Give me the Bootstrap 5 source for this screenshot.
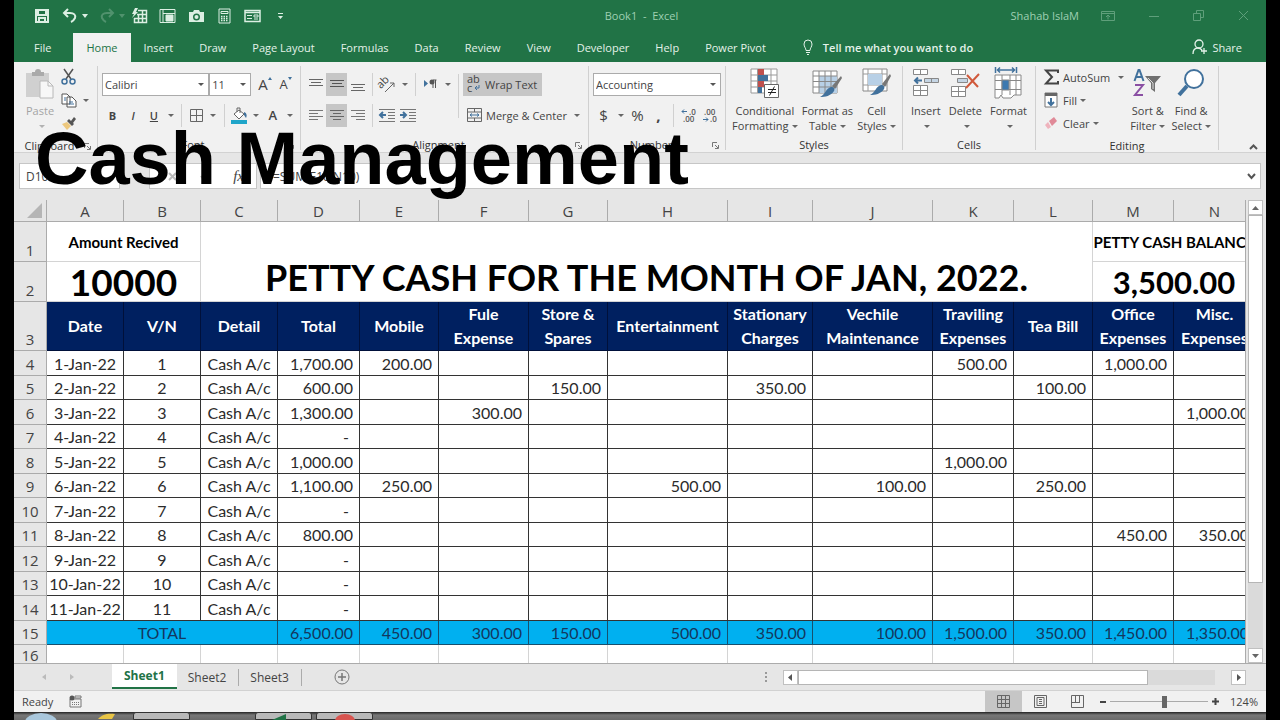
<!DOCTYPE html>
<html lang="en">
<head>
  <meta charset="UTF-8" />
  <title>Book1 - Excel</title>
  <meta name="viewport" content="width=device-width, initial-scale=1" />
  <link href="https://cdn.jsdelivr.net/npm/bootstrap@5.3.3/dist/css/bootstrap.min.css" rel="stylesheet" />
  <style>
    :root {
      --xl-green: #217346;
      --xl-ribbon: #f1f1f1;
      --xl-chrome: #e6e6e6;
      --xl-line: #ababab;
      --xl-text: #444;
    }
    body {
      background: #000;
      color: var(--xl-text);
      font-family: "Open Sans", "Noto Sans", sans-serif;
      font-size: 11px;
      line-height: 15px;
      padding: 0 14px;
    }
    svg { display: block; flex-shrink: 0; overflow: visible; }
    .btn {
      --bs-btn-padding-x: 0;
      --bs-btn-padding-y: 0;
      --bs-btn-font-size: 11px;
      --bs-btn-line-height: 15px;
      --bs-btn-color: #444;
      --bs-btn-border-width: 0;
      --bs-btn-border-radius: 0;
      white-space: nowrap;
    }

    /* title bar and ribbon tabs */
    .titlebar { background: var(--xl-green); height: 32px; color: #9fd0b2; }
    .titlebar .btn { --bs-btn-color: #dcefe3; }
    .titlebar .window-btn { --bs-btn-color: #5f9f7b; }
    .side { flex: 1 1 0; }
    .quick { gap: 12px; padding-left: 20px; }
    .quick .redo { margin: 0 -6px 0 -1px; }
    .window-tools { gap: 34px; padding-right: 17px; }
    .user { margin-right: -12px; }
    .tabs { background: var(--xl-green); height: 30px; padding-top: 1px; }
    .tabs a, .tabs .btn { color: #e4f2e9; text-decoration: none; }
    .tabs .tab { padding: 7px 13px; }
    .tabs .tab:first-child { padding: 7px 22px 7px 20px; }
    .tabs .tab.active { background: var(--xl-ribbon); color: var(--xl-green); }
    .tell { margin-left: 22px; }

    /* ribbon */
    .ribbon { background: var(--xl-ribbon); border-bottom: 1px solid #d2d2d2; height: 92px; padding-top: 4px; }
    .group { border-right: 1px solid #d0d0d0; min-width: 0; padding: 0 4px; height: 84px; }
    .g-clip { flex: 84 1 84px; }
    .g-font { flex: 203 1 203px; }
    .g-align { flex: 288 1 288px; }
    .g-number { flex: 137 1 137px; }
    .g-styles { flex: 177 1 177px; }
    .g-cells { flex: 133 1 133px; }
    .g-edit { flex: 183 1 183px; }
    .g-rest { flex: 47 1 47px; border: 0; }
    .group-name { height: 16px; color: #333; position: relative; padding-top: 3px; text-align: center; }
    .group-name.with-launch { padding-right: 12px; }
    .launch { position: absolute; right: 2px; top: 8px; }
    .rows { padding-top: 7px; gap: 8px; }
    .tool { width: 21px; height: 23px; display: inline-flex; align-items: center; justify-content: center; }
    .btn.on { background: #c6c6c6; }
    .wrap-btn { height: 23px; padding: 0 5px 0 4px; }
    .drop { width: 13px; height: 23px; display: inline-flex; align-items: center; justify-content: center; }
    .drop::after, .tri::after {
      content: "";
      border: 3px solid transparent;
      border-top-color: #666;
      border-bottom: 0;
      display: inline-block;
      vertical-align: 2px;
    }
    .tri::after { margin-left: 3px; }
    .split { width: 1px; background: #d0d0d0; margin: 0 4px; }
    .big { display: flex; flex-direction: column; align-items: center; padding-top: 1px !important; }
    .big svg { margin-bottom: 4px; }
    .line-btn { height: 23px; }
    .glyph-m { font-size: 13px; }
    .glyph-l { font-size: 15px; }
    .faded { opacity: .45; }
    .pick {
      appearance: none;
      border: 1px solid #ababab;
      border-radius: 0;
      color: #444;
      font-size: 11px;
      height: 23px;
      padding: 0 2px;
      background: #fff url("data:image/svg+xml,%3Csvg xmlns='http://www.w3.org/2000/svg' width='6' height='3'%3E%3Cpath d='M0 0h6L3 3z' fill='%23555'/%3E%3C/svg%3E") no-repeat right 4px center;
    }
    .pick-font { width: 109px; }
    .pick-size { width: 42px; }

    /* formula bar */
    .formulabar { background: var(--xl-chrome); padding: 10px 5px 11px; gap: 3px; }
    .formulabar .box {
      background: #fff;
      border: 1px solid #c6c6c6;
      height: 26px;
      font-size: 12px;
      color: #444;
    }
    .namebox { width: 101px; padding: 0 6px; }
    .fx { width: 108px; margin-left: 26px; padding: 0 12px 0 18px; }
    .fx i { font-family: "Liberation Serif", serif; font-size: 15px; }
    .formulabar .formula { padding: 0 12px; border: 0; outline: 0; background: none; min-width: 0; color: #444; }

    /* worksheet */
    .sheet { background: var(--xl-chrome); min-height: 0; }
    .grid-view { overflow: hidden; min-width: 0; background: #fff; border-right: 1px solid var(--xl-line); }
    .cells {
      table-layout: fixed;
      width: 1242px;
      border-collapse: separate;
      border-spacing: 0;
      font-family: Lato, "Open Sans", sans-serif;
      font-size: 16px;
      line-height: 20px;
      color: #2b2b2b;
    }
    .cells th, .cells td {
      padding: 0;
      overflow: hidden;
      white-space: nowrap;
      text-align: center;
      vertical-align: middle;
      border-right: 1px solid #d4d4d4;
      border-bottom: 1px solid #d4d4d4;
    }
    .cells thead th, .cells tbody th {
      background: var(--xl-chrome);
      border-color: var(--xl-line);
      font-family: "Open Sans", sans-serif;
      font-size: 15px;
      font-weight: 400;
      color: #444;
    }
    .cells thead th { height: 22px; }
    .cells tbody th { vertical-align: bottom; padding-bottom: 1px; }
    .cells .tall { height: 40px; }
    .cells .caption-cell { font-weight: 700; font-size: 15px; color: #000; }
    .cells .amount { font-weight: 700; font-size: 37px; line-height: 36px; color: #000; }
    .cells .balance { font-weight: 700; font-size: 31px; line-height: 36px; color: #000; }
    .cells .sheet-title { font-weight: 700; font-size: 36px; line-height: 48px; vertical-align: bottom; color: #000; }
    .cells .heads td {
      background: #002060;
      border-color: #00103a;
      color: #fff;
      font-weight: 700;
      line-height: 24px;
      height: 49px;
      white-space: normal;
    }
    .cells .entry td, .cells .entry th, .cells .total td { height: 24px; }
    .cells .entry:nth-child(even) td { height: 25px; }
    .cells .entry td { border-color: #333; padding-top: 1px; }
    .cells .total td { background: #00b0f0; border-color: #17506e; color: #14375e; }
    .cells .num { text-align: right; padding-right: 6px; }
    .cells .dash { padding-right: 10px; }

    /* scroll bars, sheet tabs and status bar */
    .vscroll { width: 20px; padding: 0 3px 0 2px; }
    .arrow-btn { width: 15px; height: 15px; background: #fff; border: 1px solid #c0c0c0; display: flex; align-items: center; justify-content: center; }
    .thumb { background: #fff; border: 1px solid #b5b5b5; }
    .track { background: #dadada; }
    .sheetbar { background: var(--xl-chrome); border-top: 1px solid var(--xl-line); height: 27px; font-size: 12px; }
    .sheetbar a { color: #444; text-decoration: none; line-height: 17px; }
    .sheetbar .sheet-tab { padding: 0 12px 0 11px; border-right: 1px solid var(--xl-line); }
    .sheetbar .sheet-tab.active { background: #fff; color: var(--xl-green); font-weight: 700; border: 0; border-bottom: 2px solid var(--xl-green); padding: 3px 12px; }
    .sheet-nav { margin: 0 38px 0 28px; }
    .new-sheet { margin-left: 32px; }
    .hscroll { flex: 0 0 37%; margin-right: 20px; }
    .statusbar { background: var(--xl-ribbon); border-top: 1px solid #d2d2d2; height: 22px; }
    .view-btn { width: 37px; height: 21px; display: flex; align-items: center; justify-content: center; }
    .zoom-range { appearance: none; width: 98px; height: 12px; background: linear-gradient(#aaa, #aaa) no-repeat center / 100% 1px; }
    .zoom-range::-webkit-slider-thumb { appearance: none; width: 5px; height: 12px; background: #666; }
    .zoom-value { margin-left: 11px; }
    .taskbar { height: 8px; background: linear-gradient(#222, #777 3px, #6b6b6b); overflow: hidden; }
    .task { width: 57px; height: 8px; border-radius: 3px 3px 0 0; border: 1px solid #333; background: #b9b9b9; }
    .task-gap { margin-left: 65px; }

    .banner {
      position: absolute;
      left: 35px;
      top: 122px;
      margin: 0;
      font: 700 74px/74px "Liberation Sans", Arial, sans-serif;
      color: #000;
      white-space: nowrap;
      pointer-events: none;
    }
  </style>
</head>
<body>
  <div class="vh-100 d-flex flex-column overflow-hidden">

    <!-- Title bar -->
    <header class="titlebar d-flex align-items-center">
      <div class="side quick d-flex align-items-center">
        <button class="btn" aria-label="Save"><svg width="16" height="16" viewBox="0 0 16 16" fill="none" stroke="currentColor" stroke-width="2"><path d="M2 2h12v12H2zM4 2v5h8V2M5 14v-4h6v4"/></svg></button>
        <button class="btn d-flex align-items-center gap-1" aria-label="Undo"><svg width="16" height="16" viewBox="0 0 16 16" fill="none" stroke="currentColor" stroke-width="2"><path d="M6 1 2 5l4 4M2 5h6c4 0 6 2 5 5-1 2-2 3-4 4"/></svg><svg width="6" height="4"><path d="M0 0h6L3 4z" fill="currentColor"/></svg></button>
        <button class="btn redo d-flex align-items-center gap-1 opacity-25" aria-label="Redo"><svg width="16" height="16" viewBox="0 0 16 16" fill="none" stroke="currentColor" stroke-width="2"><path d="m10 1 4 4-4 4M14 5H8C4 5 2 7 3 10c1 2 2 3 4 4"/></svg><svg width="6" height="4"><path d="M0 0h6L3 4z" fill="currentColor"/></svg></button>
        <button class="btn" aria-label="Quick analysis"><svg width="16" height="16" viewBox="0 0 16 16" fill="none" stroke="currentColor"><path d="M7 2.500h8.500v12H3.500V10M3 10.500h13M6 6.500h9M7.500 6v9M11.500 2v13" stroke-width="1.500"/><path d="M4 0h3L5 4h2L1 10l2-4H1z" fill="currentColor" stroke="none"/></svg></button>
        <button class="btn" aria-label="Full screen"><svg width="17" height="16" viewBox="0 0 17 16" fill="none" stroke="currentColor"><path d="M1 1.500h15v13H1zM4 1.500v13M4 5.500h12"/><path d="M7 7h7v6H7z" fill="currentColor"/></svg></button>
        <button class="btn" aria-label="Camera"><svg width="17" height="16" viewBox="0 0 17 16"><path fill="currentColor" fill-rule="evenodd" d="M1 4h4l1-2h5l1 2h4v10H1zM8.500 5.500a3.500 3.500 0 1 0 0 7 3.500 3.500 0 0 0 0-7z"/><circle cx="8.500" cy="9" r="2" fill="currentColor"/></svg></button>
        <button class="btn" aria-label="Calculator"><svg width="15" height="16" viewBox="0 0 15 16" fill="none" stroke="currentColor"><path d="M2 1h11v14H2zM4 3.500h7v2H4z"/><path d="M4 8.500h7M4 10.500h7M4 12.500h7" stroke-width="1.500" stroke-dasharray="1.500 1"/></svg></button>
        <button class="btn" aria-label="Form"><svg width="17" height="16" viewBox="0 0 17 16" fill="none" stroke="currentColor"><path d="M1 2.500h15v11H1zM1 4.500h15" stroke-width="1.500"/><path d="M3 7.500h5M3 10.500h5M10 7h4v2h-4zM10 11h4"/></svg></button>
        <button class="btn ms-1" aria-label="Customize toolbar"><svg width="8" height="8" viewBox="0 0 8 8" fill="currentColor"><path d="M1 1h5v1H1zM1 4h5L3.500 7z"/></svg></button>
      </div>
      <div class="text-center">Book1&nbsp; -&nbsp; Excel</div>
      <div class="side window-tools d-flex align-items-center justify-content-end">
        <span class="user">Shahab IslaM</span>
        <button class="btn window-btn" aria-label="Ribbon display"><svg width="14" height="12" viewBox="0 0 14 12" fill="none" stroke="currentColor"><path d="M.5 1.500h13v9H.5zM.5 3.500h13M7 9.500V5M5 7l2-2 2 2"/></svg></button>
        <button class="btn window-btn" aria-label="Minimize"><svg width="10" height="10"><path d="M0 5.500h10" stroke="currentColor"/></svg></button>
        <button class="btn window-btn" aria-label="Restore"><svg width="11" height="11" viewBox="0 0 11 11" fill="none" stroke="currentColor"><path d="M.5 3.500h7v7h-7zM3.500 3V.5h7v7H8"/></svg></button>
        <button class="btn window-btn" aria-label="Close"><svg width="11" height="11" viewBox="0 0 11 11" stroke="currentColor"><path d="m1 1 9 9M10 1l-9 9"/></svg></button>
      </div>
    </header>

    <!-- Ribbon tabs -->
    <nav class="tabs d-flex align-items-stretch">
      <a class="tab" href="#">File</a>
      <a class="tab active" href="#">Home</a>
      <a class="tab" href="#">Insert</a>
      <a class="tab" href="#">Draw</a>
      <a class="tab" href="#">Page Layout</a>
      <a class="tab" href="#">Formulas</a>
      <a class="tab" href="#">Data</a>
      <a class="tab" href="#">Review</a>
      <a class="tab" href="#">View</a>
      <a class="tab" href="#">Developer</a>
      <a class="tab" href="#">Help</a>
      <a class="tab" href="#">Power Pivot</a>
      <button class="btn tell d-flex align-items-center fw-semibold">
        <svg class="me-2" width="14" height="16" viewBox="0 0 14 16" fill="none" stroke="currentColor"><path d="M5 11.500C5 9 3 8 3 5a4 4 0 0 1 8 0c0 3-2 4-2 6.500zM5 13.500h4M6 15.500h2"/></svg>
        Tell me what you want to do
      </button>
      <button class="btn d-flex align-items-center ms-auto me-4">
        <svg class="me-1" width="16" height="16" viewBox="0 0 16 16" fill="none" stroke="currentColor" stroke-width="1.300"><circle cx="7" cy="5" r="4"/><path d="M1 15c0-4 2-6 5-6 2 0 3 1 4 2M12 9v6M9 12h6"/></svg>
        Share
      </button>
    </nav>

    <!-- Ribbon -->
    <section class="ribbon d-flex">
      <div class="group g-clip d-flex flex-column">
        <div class="d-flex flex-fill">
          <button class="btn big faded ms-2">
            <svg width="28" height="32" viewBox="0 0 28 32"><path d="M0 6h23v24H0z" fill="#aaa"/><path d="M6 9V5h3a3 3 0 0 1 6 0h3v4z" fill="#555"/><path d="M14 14h8l5 5v12H14z" fill="#fff" stroke="#777"/><path d="M22 14v5h5" fill="none" stroke="#777"/></svg>
            <span>Paste</span><span class="tri"></span>
          </button>
          <div class="d-flex flex-column ms-1">
            <button class="btn tool" aria-label="Cut"><svg width="15" height="16" viewBox="0 0 15 16" fill="none" stroke-width="1.500"><path d="m3 0 7 10M12 0 5 10" stroke="#555"/><circle cx="3.500" cy="12.500" r="2.500" stroke="#41719c"/><circle cx="11.500" cy="12.500" r="2.500" stroke="#41719c"/></svg></button>
            <div class="d-flex"><button class="btn tool" aria-label="Copy"><svg width="16" height="15" viewBox="0 0 16 15" fill="#fff" stroke="#555"><path d="M1 1h5l3 3v7H1zM6 4h5l4 4v6H6z"/><path d="M3 5h2M3 7h2M8 9h4M8 11h5" stroke="#41719c"/></svg></button><span class="drop"></span></div>
            <button class="btn tool" aria-label="Format painter"><svg width="16" height="15" viewBox="0 0 16 15"><path d="M1 8 6 6l4 4-4 4z" fill="#edc87e"/><path d="m6 5 2-2 2 2 3-4 2 2-3 4 1 1-2 2z" fill="#555"/></svg></button>
          </div>
        </div>
        <div class="group-name with-launch">Clipboard<svg class="launch" width="7" height="7" viewBox="0 0 7 7" fill="none" stroke="#777"><path d="M.5 5V.5H5M3 3l3 3M6.500 3v3.500H3"/></svg></div>
      </div>

      <div class="group g-font d-flex flex-column">
        <div class="rows d-flex flex-column flex-fill">
          <div class="d-flex">
            <select class="pick pick-font" aria-label="Font"><option>Calibri</option></select>
            <select class="pick pick-size me-1" aria-label="Font size"><option>11</option></select>
            <button class="btn tool" aria-label="Increase font size"><span class="glyph-l">A</span><svg class="align-self-start mt-1" width="4" height="4"><path d="M0 3h4L2 0z" fill="#41719c"/></svg></button>
            <button class="btn tool" aria-label="Decrease font size"><span class="glyph-m">A</span><svg class="align-self-start mt-1" width="4" height="4"><path d="M0 0h4L2 3z" fill="#41719c"/></svg></button>
          </div>
          <div class="d-flex">
            <button class="btn tool fw-bold">B</button>
            <button class="btn tool fst-italic fw-semibold">I</button>
            <button class="btn tool text-decoration-underline fw-semibold">U</button>
            <span class="drop"></span><span class="split"></span>
            <button class="btn tool" aria-label="Borders"><svg width="13" height="13" viewBox="0 0 13 13" fill="none" stroke="#666"><path d="M.5.5h12v12H.5zM6.500 0v13M0 6.500h13"/></svg></button>
            <span class="drop"></span><span class="split"></span>
            <button class="btn tool" aria-label="Fill colour"><svg width="17" height="17" viewBox="0 0 17 17"><path d="m3 7 5-4 5 4-5 5z" fill="#fff" stroke="#666"/><path d="M6 5V1h3v5" fill="none" stroke="#666"/><path d="M13 5c3 1 3 4 2 6l-2-3z" fill="#41719c"/><path d="M0 13h16v4H0z" fill="#1fa5c9"/></svg></button>
            <span class="drop"></span>
            <button class="btn tool glyph-m fw-semibold" aria-label="Font colour">A</button>
            <span class="drop"></span>
          </div>
        </div>
        <div class="group-name with-launch">Font<svg class="launch" width="7" height="7" viewBox="0 0 7 7" fill="none" stroke="#777"><path d="M.5 5V.5H5M3 3l3 3M6.500 3v3.500H3"/></svg></div>
      </div>

      <div class="group g-align d-flex flex-column">
        <div class="d-flex flex-fill">
          <div class="rows d-flex flex-column">
            <div class="d-flex">
              <button class="btn tool" aria-label="Top align"><svg width="14" height="16" stroke="#666"><path d="M0 3.500h14M2 6.500h10M0 9.500h14"/></svg></button>
              <button class="btn tool on" aria-label="Middle align"><svg width="14" height="16" stroke="#555"><path d="M0 4.500h14M2 7.500h10M0 10.500h14"/></svg></button>
              <button class="btn tool" aria-label="Bottom align"><svg width="14" height="16" stroke="#666"><path d="M0 8.500h14M2 11.500h10M0 14.500h14"/></svg></button>
              <span class="split"></span>
              <button class="btn tool" aria-label="Orientation"><svg width="17" height="17" viewBox="0 0 17 17"><text x="0" y="9" font-size="11" fill="#444" transform="rotate(-45 6 9)">ab</text><path d="m6 16 9-9M15 11V7h-4" fill="none" stroke="#666"/></svg></button>
              <span class="drop"></span><span class="split"></span>
              <button class="btn tool" aria-label="Text direction"><svg width="13" height="10" viewBox="0 0 13 10"><path d="M0 1v7l4-3.500z" fill="#41719c"/><path d="M9 1v8M11.500 1v8M12.500 1H9" stroke="#555" fill="none"/><circle cx="8" cy="3" r="2.500" fill="#555"/></svg></button>
              <span class="drop"></span>
            </div>
            <div class="d-flex">
              <button class="btn tool" aria-label="Align left"><svg width="14" height="14" stroke="#777"><path d="M0 2.500h14M0 5.500h9M0 8.500h14M0 11.500h9"/></svg></button>
              <button class="btn tool on" aria-label="Centre"><svg width="14" height="14" stroke="#666"><path d="M0 2.500h14M3 5.500h8M0 8.500h14M3 11.500h8"/></svg></button>
              <button class="btn tool" aria-label="Align right"><svg width="14" height="14" stroke="#777"><path d="M0 2.500h14M5 5.500h9M0 8.500h14M5 11.500h9"/></svg></button>
              <span class="split"></span>
              <button class="btn tool" aria-label="Decrease indent"><svg width="17" height="14" viewBox="0 0 17 14" fill="none"><path d="M0 1.500h16M9 4.500h7M9 7.500h7M9 10.500h7M0 13.500h16" stroke="#777"/><path d="M7 7H1M4 4 1 7l3 3" stroke="#41719c" stroke-width="2"/></svg></button>
              <button class="btn tool" aria-label="Increase indent"><svg width="17" height="14" viewBox="0 0 17 14" fill="none"><path d="M0 1.500h16M9 4.500h7M9 7.500h7M9 10.500h7M0 13.500h16" stroke="#777"/><path d="M0 7h6M3 4l3 3-3 3" stroke="#41719c" stroke-width="2"/></svg></button>
            </div>
          </div>
          <span class="split mt-2 mb-3"></span>
          <div class="rows d-flex flex-column">
            <button class="btn on wrap-btn align-self-start d-flex align-items-center"><svg class="me-1" width="14" height="18" viewBox="0 0 14 18"><text x="0" y="8" font-size="11" fill="#444">ab</text><text x="0" y="17" font-size="11" fill="#444">c</text><path d="M12 10v3H8M10 11l-2 2 2 2" fill="none" stroke="#41719c"/></svg>Wrap Text</button>
            <div class="d-flex"><button class="btn d-flex align-items-center ps-1"><svg class="me-1" width="15" height="14" viewBox="0 0 15 14" fill="none" stroke="#666"><path d="M.5.5h14v13H.5zM.5 4h14M.5 10h14M7.500 0v4M7.500 10v4"/><path d="M3 7h9M5 5.500 3 7l2 1.500M10 5.500 12 7l-2 1.500" stroke="#41719c"/></svg>Merge &amp; Center</button><span class="drop ms-1"></span></div>
          </div>
        </div>
        <div class="group-name with-launch">Alignment<svg class="launch" width="7" height="7" viewBox="0 0 7 7" fill="none" stroke="#777"><path d="M.5 5V.5H5M3 3l3 3M6.500 3v3.500H3"/></svg></div>
      </div>

      <div class="group g-number d-flex flex-column">
        <div class="rows d-flex flex-column flex-fill">
          <select class="pick w-100" aria-label="Number format"><option>Accounting</option></select>
          <div class="d-flex">
            <button class="btn tool glyph-l">$</button><span class="drop"></span>
            <button class="btn tool glyph-l">%</button>
            <button class="btn tool glyph-l fw-bold">,</button>
            <span class="split"></span>
            <button class="btn tool" aria-label="Increase decimal"><svg width="16" height="15" viewBox="0 0 16 15" font-size="8" font-weight="600" fill="#555"><text x="8" y="7">.0</text><text x="2" y="14">.00</text><path d="M6 3.500H1M3 1.500l-2 2 2 2" fill="none" stroke="#41719c"/></svg></button>
            <button class="btn tool" aria-label="Decrease decimal"><svg width="16" height="15" viewBox="0 0 16 15" font-size="8" font-weight="600" fill="#555"><text x="2" y="7">.00</text><text x="8" y="14">.0</text><path d="M1 11.500h5M4 9.500l2 2-2 2" fill="none" stroke="#41719c"/></svg></button>
          </div>
        </div>
        <div class="group-name with-launch">Number<svg class="launch" width="7" height="7" viewBox="0 0 7 7" fill="none" stroke="#777"><path d="M.5 5V.5H5M3 3l3 3M6.500 3v3.500H3"/></svg></div>
      </div>

      <div class="group g-styles d-flex flex-column">
        <div class="d-flex flex-fill justify-content-around">
          <button class="btn big">
            <svg width="30" height="32" viewBox="0 0 30 32"><path d="M1 2h26v24H1z" fill="#fff" stroke="#999"/><path d="M1 8h26M1 14h26M1 20h26M7.500 2v24M21 2v24" stroke="#999"/><path d="M8 2h6v6H8zM8 14h6v6H8z" fill="#c0504d"/><path d="M8 8h10v6H8zM8 20h4v6H8z" fill="#41719c"/><path d="M14.500 17.500h14v13h-14z" fill="#fff" stroke="#666"/><path d="M18 22.500h8M18 25.500h8M24.500 19.500l-5 9" stroke="#222"/></svg>
            <span>Conditional</span><span class="tri">Formatting</span>
          </button>
          <button class="btn big">
            <svg width="30" height="32" viewBox="0 0 30 32"><path d="M1 4h24v22H1z" fill="#fff" stroke="#888"/><path d="M7 9h18v17H7z" fill="#b8d0e6"/><path d="M1 9h24M1 14.500h24M1 20h24M7 4v22M13 4v22M19 4v22" stroke="#888"/><path d="m29 9-9 10 3 3 7-11z" fill="#777"/><path d="M19 20c3 0 4 2 3 4-3 5-9 6-14 6 5-2 6-9 11-10z" fill="#41719c"/></svg>
            <span>Format as</span><span class="tri">Table</span>
          </button>
          <button class="btn big">
            <svg width="30" height="32" viewBox="0 0 30 32"><path d="M1 2h24v22H1z" fill="#fff" stroke="#888"/><path d="M1 7h24M1 18h24M6 2v22M20 2v22" stroke="#999"/><path d="M6 7h14v11H6z" fill="#b8d0e6"/><path d="m28 7-8 10 3 3 6-11z" fill="#777"/><path d="M19 18c3 0 4 2 3 4-3 5-9 6-14 6 5-2 6-9 11-10z" fill="#41719c"/></svg>
            <span>Cell</span><span class="tri">Styles</span>
          </button>
        </div>
        <div class="group-name">Styles</div>
      </div>

      <div class="group g-cells d-flex flex-column">
        <div class="d-flex flex-fill justify-content-around">
          <button class="btn big">
            <svg width="26" height="32" viewBox="0 0 26 32" fill="#fff" stroke="#888"><path d="M.5 2.500h14v5H.5zM7.500 2.500v5M.5 18.500h14v10H.5zM7.500 18.500v10M.5 23.500h14"/><path d="M11.500 11.500h14v4h-14zM18.500 11.500v4" fill="#c5d5e4"/><path d="M9 13.500H2M5 10.500l-3 3 3 3" fill="none" stroke="#41719c" stroke-width="2"/></svg>
            <span>Insert</span><span class="tri"></span>
          </button>
          <button class="btn big">
            <svg width="29" height="32" viewBox="0 0 29 32" fill="#fff" stroke="#888"><path d="M.5 2.500h14v5H.5zM7.500 2.500v5M.5 19.500h14v10H.5zM7.500 19.500v10M.5 24.500h14"/><path d="M6.500 11.500h10v4h-10z" fill="#c5d5e4"/><path d="m16 8 11 12M28 7 15 21" stroke="#d0593b" stroke-width="2"/></svg>
            <span>Delete</span><span class="tri"></span>
          </button>
          <button class="btn big">
            <svg width="28" height="32" viewBox="0 0 28 32" fill="#fff" stroke="#888"><path d="M1 8h26v20h-7l-3 3H9l-2-3-2 3H1zM1 13.500h26M1 22.500h26M8 8v20M16 8v20M22 8v20"/><path d="M8 13h7v10H8z" fill="#3d79b0"/><path d="M1.500 0v6M22.500 0v6M3 3h18M6 .5 3.500 3 6 5.500M18 .5 20.500 3 18 5.500" fill="none" stroke="#41719c" stroke-width="1.500"/></svg>
            <span>Format</span><span class="tri"></span>
          </button>
        </div>
        <div class="group-name">Cells</div>
      </div>

      <div class="group g-edit d-flex flex-column">
        <div class="d-flex flex-fill ps-1">
          <div class="d-flex flex-column">
            <div class="d-flex"><button class="btn d-flex align-items-center"><svg class="me-1" width="15" height="16" viewBox="0 0 15 16"><path d="M14 4V1.500H2L8 8l-6 6.500h12V12" fill="none" stroke="#444" stroke-width="2"/></svg>AutoSum</button><span class="drop ms-1"></span></div>
            <button class="btn line-btn tri d-flex align-items-center"><svg class="me-1" width="15" height="16" viewBox="0 0 15 16"><path d="M1 1h12v14H1z" fill="#fff" stroke="#777"/><path d="M1 1h12v3H1z" fill="#666"/><path d="M7 6v7M4 10l3 3 3-3" fill="none" stroke="#41719c" stroke-width="2"/></svg>Fill</button>
            <button class="btn line-btn tri d-flex align-items-center"><svg class="me-1" width="15" height="14" viewBox="0 0 15 14"><path d="m5 5 5-4 3 4-5 5z" fill="#e08a98"/><path d="m4 6 3 5-3 2-3-4z" fill="#efb3bd"/></svg>Clear</button>
          </div>
          <div class="d-flex flex-fill justify-content-around">
            <button class="btn big">
              <svg width="29" height="32" viewBox="0 0 29 32"><path d="m1.500 14 4-11h1l4 11M3 10h6" fill="none" stroke="#41719c" stroke-width="2"/><path d="M2 18h8L2 28h8" fill="none" stroke="#8a4fa3" stroke-width="2"/><path d="M12 9h16l-6 7v9l-4-3v-6z" fill="#707070"/><path d="m15 11 5 5v6" fill="none" stroke="#ddd"/></svg>
              <span>Sort &amp;</span><span class="tri">Filter</span>
            </button>
            <button class="btn big">
              <svg width="28" height="32" viewBox="0 0 28 32"><path d="M10 19 2 28" stroke="#41719c" stroke-width="4"/><circle cx="17" cy="12" r="9" fill="#fff" stroke="#41719c" stroke-width="2"/></svg>
              <span>Find &amp;</span><span class="tri">Select</span>
            </button>
          </div>
        </div>
        <div class="group-name">Editing</div>
      </div>

      <div class="group g-rest d-flex align-items-end justify-content-end">
        <button class="btn me-1" aria-label="Collapse ribbon"><svg width="9" height="6" fill="none" stroke="#555" stroke-width="2"><path d="m1 5 3.500-3.500L8 5"/></svg></button>
      </div>
    </section>

    <!-- Formula bar -->
    <div class="formulabar d-flex">
      <input class="box namebox" type="text" value="D10" aria-label="Name box" />
      <div class="box fx d-flex align-items-center justify-content-between">
        <svg width="9" height="9" stroke="#bbb" stroke-width="2"><path d="m1 1 7 7M8 1 1 8"/></svg>
        <svg width="11" height="9" stroke="#bbb" stroke-width="2" fill="none"><path d="m1 4 3 4 6-7"/></svg>
        <i>fx</i>
      </div>
      <div class="box d-flex align-items-center flex-fill">
        <input class="formula flex-fill" type="text" value="=SUM(E10:N10)" aria-label="Formula" />
        <svg class="me-1" width="9" height="7" fill="none" stroke="#555" stroke-width="2"><path d="m1 1 3.500 4L8 1"/></svg>
      </div>
    </div>

    <!-- Worksheet -->
    <main class="sheet d-flex flex-fill">
      <div class="grid-view flex-fill">
        <table class="cells">
          <colgroup id="widths"></colgroup>
          <thead><tr id="letters"><th><svg class="ms-auto me-1" width="15" height="15"><path d="M15 0v15H0z" fill="#b5b5b5"/></svg></th></tr></thead>
          <tbody id="rows">
            <tr><th class="tall">1</th><td class="caption-cell" colspan="2">Amount Recived</td><td class="sheet-title" colspan="10" rowspan="2">PETTY CASH FOR THE MONTH OF JAN, 2022.</td><td class="caption-cell" colspan="2">PETTY CASH BALANCE</td></tr>
            <tr><th class="tall">2</th><td class="amount" colspan="2">10000</td><td class="balance" colspan="2">3,500.00</td></tr>
            <tr class="heads"><th>3</th><td>Date</td><td>V/N</td><td>Detail</td><td>Total</td><td>Mobile</td><td>Fule<br>Expense</td><td>Store &amp;<br>Spares</td><td>Entertainment</td><td>Stationary<br>Charges</td><td>Vechile<br>Maintenance</td><td>Traviling<br>Expenses</td><td>Tea Bill</td><td>Office<br>Expenses</td><td>Misc.<br>Expenses</td></tr>
          </tbody>
        </table>
      </div>
      <div class="vscroll d-flex flex-column">
        <button class="btn arrow-btn" aria-label="Scroll up"><svg width="7" height="4"><path d="M0 4h7L3.500 0z" fill="#666"/></svg></button>
        <div class="track d-flex flex-column flex-fill"><div class="thumb" style="height: 85%"></div></div>
        <button class="btn arrow-btn" aria-label="Scroll down"><svg width="7" height="4"><path d="M0 0h7L3.500 4z" fill="#666"/></svg></button>
      </div>
    </main>

    <!-- Sheet tabs -->
    <nav class="sheetbar d-flex align-items-center">
      <svg class="sheet-nav" width="32" height="6" fill="#bbb"><path d="M4 0v6L0 3zM28 0v6l4-3z"/></svg>
      <a class="sheet-tab active align-self-start" href="#">Sheet1</a>
      <a class="sheet-tab" href="#">Sheet2</a>
      <a class="sheet-tab" href="#">Sheet3</a>
      <button class="btn new-sheet" aria-label="New sheet"><svg width="16" height="16" viewBox="0 0 16 16" fill="none" stroke="#777"><circle cx="8" cy="8" r="7"/><path d="M8 4v8M4 8h8" stroke-width="1.500"/></svg></button>
      <div class="ms-auto me-3"><svg width="2" height="12" fill="#999"><path d="M0 1h2v2H0zM0 5h2v2H0zM0 9h2v2H0z"/></svg></div>
      <div class="hscroll d-flex">
        <button class="btn arrow-btn" aria-label="Scroll left"><svg width="4" height="7"><path d="M4 0v7L0 3.500z" fill="#555"/></svg></button>
        <div class="track flex-fill me-3"><div class="thumb h-100" style="width: 84%"></div></div>
        <button class="btn arrow-btn" aria-label="Scroll right"><svg width="4" height="7"><path d="M0 0v7l4-3.500z" fill="#555"/></svg></button>
      </div>
    </nav>

    <!-- Status bar -->
    <footer class="statusbar d-flex align-items-center ps-2">
      <span class="me-3">Ready</span>
      <svg width="13" height="13" viewBox="0 0 13 13"><path d="M1 4h11v8H1zM6 1h6v2H6z" fill="none" stroke="#777"/><circle cx="3" cy="3" r="2.500" fill="#555"/><path d="M3 7.500h8M3 9.500h8" stroke="#777" stroke-dasharray="1 1"/></svg>
      <div class="d-flex align-items-center ms-auto me-2">
        <button class="btn view-btn on" aria-label="Normal view"><svg width="13" height="13" viewBox="0 0 13 13" fill="none" stroke="#666"><path d="M.5.5h12v12H.5zM4.500 0v13M8.500 0v13M0 4.500h13M0 8.500h13"/></svg></button>
        <button class="btn view-btn" aria-label="Page layout view"><svg width="13" height="13" viewBox="0 0 13 13" fill="none" stroke="#666"><path d="M.5.5h12v12H.5zM3 2.500h7v8H3zM5 4.500h3M5 6.500h3M5 8.500h3"/></svg></button>
        <button class="btn view-btn" aria-label="Page break view"><svg width="13" height="13" viewBox="0 0 13 13" fill="none" stroke="#666"><path d="M.5.5h12v12H.5zM4.500 0v7.500M8.500 0v7.500M0 7.500h9"/></svg></button>
        <button class="btn ms-1 me-1" aria-label="Zoom out"><svg width="6" height="6"><path d="M0 3h6" stroke="#444" stroke-width="2"/></svg></button>
        <input class="zoom-range" type="range" min="10" max="215" value="124" aria-label="Zoom" />
        <button class="btn ms-1" aria-label="Zoom in"><svg width="7" height="7"><path d="M0 3.500h7M3.500 0v7" stroke="#444" stroke-width="2"/></svg></button>
        <span class="zoom-value">124%</span>
      </div>
    </footer>

    <div class="taskbar d-flex">
      <svg width="119" height="7" viewBox="0 0 119 7"><ellipse cx="27" cy="10" rx="16" ry="9" fill="#a9c7dc"/><path d="M84 7c4-5 10-6 17-5l-3 5z" fill="#e9c545"/></svg>
      <div class="task"></div>
      <div class="task task-gap"><svg width="57" height="7"><path d="m16 7 14-6v6z" fill="#217346"/></svg></div>
      <div class="task ms-1"><svg width="57" height="7"><ellipse cx="28" cy="8" rx="10" ry="7" fill="#d8544f"/></svg></div>
    </div>
  </div>

  <h1 class="banner">Cash Management</h1>

  <script src="https://cdn.jsdelivr.net/npm/bootstrap@5.3.3/dist/js/bootstrap.bundle.min.js"></script>
  <script>
    const widths = [33, 77, 77, 77, 82, 79, 90, 79, 120, 85, 120, 81, 79, 81, 82];
    const letters = "ABCDEFGHIJKLMN".split("");

    // total first, then amounts keyed by column letter
    const entries = [
      { total: "1,700.00", E: "200.00", K: "500.00", M: "1,000.00" },
      { total: "600.00", G: "150.00", I: "350.00", L: "100.00" },
      { total: "1,300.00", F: "300.00", N: "1,000.00" },
      { total: "-" },
      { total: "1,000.00", K: "1,000.00" },
      { total: "1,100.00", E: "250.00", H: "500.00", J: "100.00", L: "250.00" },
      { total: "-" },
      { total: "800.00", M: "450.00", N: "350.00" },
      { total: "-" },
      { total: "-" },
      { total: "-" }
    ];
    const totals = ["6,500.00", "450.00", "300.00", "150.00", "500.00", "350.00", "100.00", "1,500.00", "350.00", "1,450.00", "1,350.00"];

    document.getElementById("widths").innerHTML = widths.map(w => `<col style="width: ${w}px">`).join("");
    document.getElementById("letters").innerHTML += letters.map(l => `<th>${l}</th>`).join("");

    let html = "";
    entries.forEach((entry, i) => {
      const n = i + 1;
      html += `<tr class="entry"><th>${n + 3}</th><td>${n}-Jan-22</td><td>${n}</td><td>Cash A/c</td>`;
      html += `<td class="num ${entry.total === "-" ? "dash" : ""}">${entry.total}</td>`;
      html += letters.slice(4).map(l => `<td class="num">${entry[l] || ""}</td>`).join("") + "</tr>";
    });
    html += `<tr class="total"><th>15</th><td colspan="3">TOTAL</td>` + totals.map(t => `<td class="num">${t}</td>`).join("") + "</tr>";
    html += `<tr><th>16</th>` + letters.map(() => "<td></td>").join("") + "</tr>";
    document.getElementById("rows").insertAdjacentHTML("beforeend", html);
  </script>
</body>
</html>
